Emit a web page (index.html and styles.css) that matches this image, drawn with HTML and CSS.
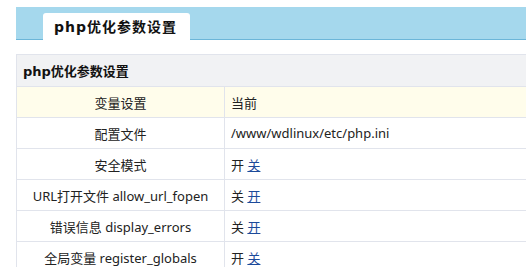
FILE: index.html
```html
<!DOCTYPE html>
<html lang="zh-CN">
<head>
  <meta charset="UTF-8">
  <title>php优化参数设置</title>
  <link rel="stylesheet" href="styles.css">
</head>
<body>
  <div class="page">
    <div class="tab-bar">
      <div class="tab">php优化参数设置</div>
    </div>

    <table class="settings">
      <tr class="caption-row">
        <th colspan="2">php优化参数设置</th>
      </tr>
      <tr class="head-row">
        <td class="name">变量设置</td>
        <td>当前</td>
      </tr>
      <tr>
        <td class="name">配置文件</td>
        <td>/www/wdlinux/etc/php.ini</td>
      </tr>
      <tr>
        <td class="name">安全模式</td>
        <td>开 <a href="#">关</a></td>
      </tr>
      <tr>
        <td class="name">URL打开文件 allow_url_fopen</td>
        <td>关 <a href="#">开</a></td>
      </tr>
      <tr>
        <td class="name">错误信息 display_errors</td>
        <td>关 <a href="#">开</a></td>
      </tr>
      <tr>
        <td class="name">全局变量 register_globals</td>
        <td>开 <a href="#">关</a></td>
      </tr>
    </table>
  </div>
</body>
</html>
```

FILE: styles.css
```css
body {
  margin: 0;
  font-family: "Noto Sans", "Noto Sans CJK SC", sans-serif;
  font-size: 13px;
  color: #222;
  overflow: hidden;
}
.page {
  padding: 7px 0 0 16px;
  width: 560px;
}
.tab-bar {
  background-color: #a5d8ed;
  border-bottom: 1px solid #6cb6d9;
  height: 32px;
  display: flex;
  align-items: flex-end;
  padding-left: 27px;
}
.tab {
  background-color: #fff;
  border-radius: 3px 3px 0 0;
  width: 147px;
  height: 27px;
  margin-bottom: -1px;
  box-sizing: border-box;
  padding-left: 11px;
  line-height: 28px;
  font-family: "DejaVu Sans", "Noto Sans CJK SC", sans-serif;
  font-size: 14px;
  font-weight: bold;
  letter-spacing: 1px;
  color: #111;
}
.settings {
  margin-top: 14px;
  width: 100%;
  border-collapse: collapse;
}
.settings th,
.settings td {
  border: 1px solid #e1e4ec;
  height: 30px;
  padding: 0 6px;
}
.caption-row th {
  background-color: #f1f2f4;
  text-align: left;
  font-family: "DejaVu Sans", "Noto Sans CJK SC", sans-serif;
  font-size: 13px;
  font-weight: bold;
  height: 31px;
  color: #111;
}
.head-row td {
  background-color: #fffdeb;
}
.settings td.name {
  width: 195px;
  text-align: center;
}
.settings a {
  color: #1c4a9a;
}
```
